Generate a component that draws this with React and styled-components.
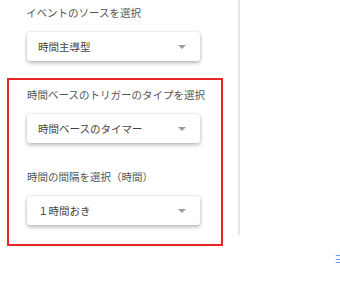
import React from 'react'
import styled, { createGlobalStyle } from 'styled-components'

const Global = createGlobalStyle`
  body {
    margin: 0;
    background: #fff;
    font-family: "Noto Sans CJK JP", "Noto Sans", sans-serif;
  }
`

const Select = ({ value }) => (
  <SelectBox>
    <SelectText>{value}</SelectText>
    <Arrow />
  </SelectBox>
)

const App = () => {
  return (
    <Page>
      <Global />
      <TopRow>
        <Panel>
          <Label>イベントのソースを選択</Label>
          <Select value="時間主導型" />
          <Highlight>
            <Label>時間ベースのトリガーのタイプを選択</Label>
            <Select value="時間ベースのタイマー" />
            <Label spaced>時間の間隔を選択（時間）</Label>
            <Select value="１時間おき" />
          </Highlight>
        </Panel>
        <Divider />
      </TopRow>
      <Footer>
        <LinkText>ヨ</LinkText>
      </Footer>
    </Page>
  )
}

const Page = styled.div`
  width: 340px;
  height: 297px;
  overflow: hidden;
`

const TopRow = styled.div`
  display: flex;
  flex-direction: row;
  align-items: flex-start;
  height: 235px;
`

const Panel = styled.div`
  width: 238px;
  padding-top: 5px;
  box-sizing: border-box;
  flex-shrink: 0;
`

const Divider = styled.div`
  width: 2px;
  height: 235px;
  background: #e6e6e6;
  flex-shrink: 0;
`

const Label = styled.div`
  font-size: 10.5px;
  line-height: 16px;
  color: #555;
  padding-left: 26px;
  margin-top: ${(p) => (p.spaced ? '26px' : '0')};
  margin-bottom: 11px;
  white-space: nowrap;
`

const Highlight = styled.div`
  margin: 17px 0 0 7px;
  width: 216px;
  height: 168px;
  box-sizing: border-box;
  border: 2px solid #e8262a;
  padding-top: 7px;
  position: relative;
  z-index: 1;

  ${Label} {
    padding-left: 18px;
  }
`

const SelectBox = styled.div`
  display: flex;
  align-items: center;
  justify-content: space-between;
  width: 173px;
  height: 29px;
  margin-left: 27px;
  box-sizing: border-box;
  padding: 0 14px 0 11px;
  background: #fff;
  border-radius: 3px;
  box-shadow: 0 2px 4px rgba(0, 0, 0, 0.28), 0 0 2px rgba(0, 0, 0, 0.12);

  ${Highlight} & {
    margin-left: 18px;
  }
`

const SelectText = styled.span`
  font-size: 10.5px;
  color: #444;
  white-space: nowrap;
`

const Arrow = styled.span`
  width: 0;
  height: 0;
  border-left: 4px solid transparent;
  border-right: 4px solid transparent;
  border-top: 4px solid #9e9e9e;
`

const Footer = styled.div`
  padding: 15px 0 0 334px;
  line-height: 12px;
`

const LinkText = styled.span`
  font-size: 10px;
  line-height: 12px;
  color: #4a86e8;
  white-space: nowrap;
`

export default App
